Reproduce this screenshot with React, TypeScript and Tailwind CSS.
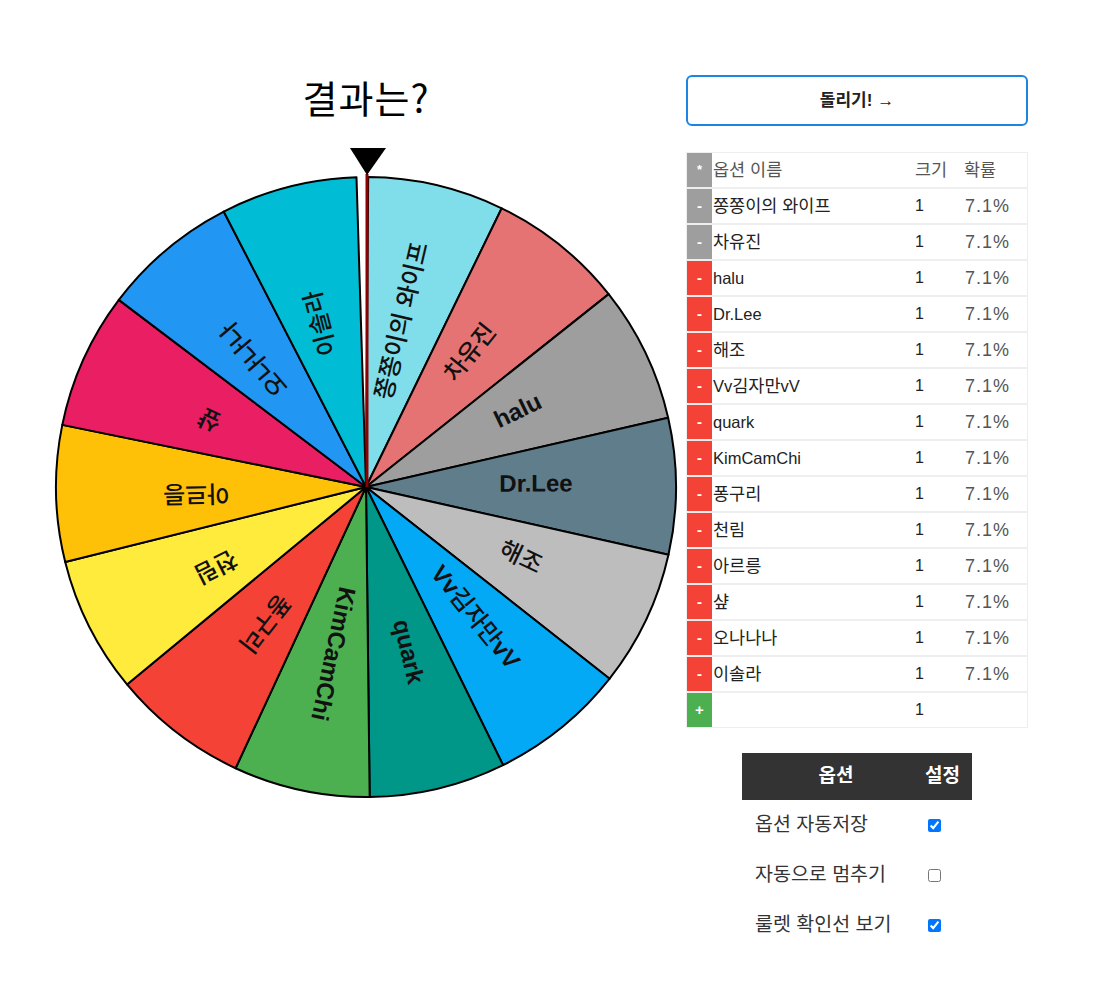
const NAMES = [
  "쫑쫑이의 와이프",
  "차유진",
  "halu",
  "Dr.Lee",
  "해조",
  "Vv김자만vV",
  "quark",
  "KimCamChi",
  "퐁구리",
  "천림",
  "아르릉",
  "샾",
  "오나나나",
  "이솔라",
];

const COLORS = [
  "#80DEEA",
  "#E57373",
  "#9E9E9E",
  "#607D8B",
  "#BDBDBD",
  "#03A9F4",
  "#009688",
  "#4CAF50",
  "#F44336",
  "#FFEB3B",
  "#FFC107",
  "#E91E63",
  "#2196F3",
  "#00BCD4",
];

const CX = 320;
const CY = 347;
const R = 310;
// each option is 7.1%, so the wheel leaves a small gap at the top
const STEP = 0.071 * 360;
const OFFSET = 0.4;

const pt = (deg: number, r: number) => {
  const a = (deg * Math.PI) / 180;
  return [CX + r * Math.sin(a), CY - r * Math.cos(a)];
};

// split a label into hangul / latin runs
const runs = (s: string) => s.split(/([가-힣 ]+)/).filter(Boolean);
const isHangul = (s: string) => /[가-힣]/.test(s);

const Wheel = () => (
  <svg width="640" height="662" className="mt-[21px] block">
    {NAMES.map((name, i) => {
      const a0 = OFFSET + i * STEP;
      const a1 = a0 + STEP;
      const [x0, y0] = pt(a0, R);
      const [x1, y1] = pt(a1, R);
      return (
        <path
          key={name}
          d={`M${CX} ${CY} L${x0} ${y0} A${R} ${R} 0 0 1 ${x1} ${y1} Z`}
          fill={COLORS[i]}
          stroke="#000"
          strokeWidth="2"
          strokeLinejoin="round"
        />
      );
    })}
    {NAMES.map((name, i) => {
      const mid = OFFSET + i * STEP + STEP / 2;
      return (
        <text
          key={name}
          transform={`translate(${CX} ${CY}) rotate(${mid - 90})`}
          x="170"
          y="5"
          textAnchor="middle"
          fontSize="24"
          fill="#111"
          fontFamily="'Liberation Sans', 'Noto Sans CJK KR', sans-serif"
        >
          {runs(name).map((part, j) => (
            <tspan key={j} fontWeight={isHangul(part) ? 500 : 700}>
              {part}
            </tspan>
          ))}
        </text>
      );
    })}
    <line x1="321" y1="34" x2="321" y2={CY} stroke="#8B0000" strokeWidth="3" />
    <polygon points="304,8 340,8 321,35" fill="#000" />
  </svg>
);

const Label = ({ text, ko }: { text: string; ko: string }) => (
  <>
    {runs(text).map((part, j) =>
      isHangul(part) ? (
        <span key={j} className={ko}>
          {part}
        </span>
      ) : (
        <span key={j}>{part}</span>
      )
    )}
  </>
);

const rows = NAMES.map((name, i) => ({ name, locked: i < 2 }));

const App = () => {
  return (
    <div className="flex min-h-[983px] bg-white pt-[75px] font-['Liberation_Sans','Noto_Sans_CJK_KR',sans-serif] text-[#222]">
      <div className="ml-[46px] flex w-[640px] flex-col items-center">
        <h1 className="font-['Noto_Sans_CJK_KR',sans-serif] text-[38px] leading-[44px] font-normal tracking-[1px] text-black">결과는?</h1>
        <Wheel />
      </div>

      <div className="w-[342px]">
        <button className="h-[51px] w-full rounded-[6px] border-2 border-[#1c84e3] bg-white text-[17px] font-bold text-[#222]">
          돌리기! <span className="font-normal">→</span>
        </button>

        <div className="mt-[26px] border border-[#eee]">
          <div className="flex h-[34px] items-center">
            <div className="flex h-full w-[25px] items-center justify-center bg-[#9e9e9e] text-[13px] font-bold text-white">*</div>
            <div className="flex-1 pl-[1px] text-[17.5px] text-[#555]">옵션 이름</div>
            <div className="w-[49px] text-[17.5px] text-[#555]">크기</div>
            <div className="w-[63px] text-[17.5px] text-[#555]">확률</div>
          </div>
          {rows.map((row) => (
            <div key={row.name} className="flex h-[36px] items-center border-t-2 border-[#eee]">
              <div
                className={`flex h-full w-[25px] items-center justify-center text-[15px] font-bold text-white ${
                  row.locked ? "bg-[#9e9e9e]" : "bg-[#f44336]"
                }`}
              >
                -
              </div>
              <div className="flex-1 pl-[1px] text-[16.5px] text-[#222]">
                <Label text={row.name} ko="text-[17.5px]" />
              </div>
              <div className="w-[49px] text-[16px] text-[#222]">1</div>
              <div className="w-[63px] pl-[1px] text-[18px] tracking-[1px] text-[#555]">7.1%</div>
            </div>
          ))}
          <div className="flex h-[36px] items-center border-t-2 border-[#eee]">
            <div className="flex h-full w-[25px] items-center justify-center bg-[#4caf50] text-[15px] font-bold text-white">+</div>
            <div className="flex-1" />
            <div className="w-[49px] text-[16px] text-[#222]">1</div>
            <div className="w-[63px]" />
          </div>
        </div>

        <table className="mx-auto mt-[25px] w-[230px] border-collapse">
          <thead>
            <tr className="h-[47px] bg-[#333] text-[19px] font-bold text-white">
              <th className="w-[180px] pl-[8px] text-center">옵션</th>
              <th className="pr-[12px] text-right">설정</th>
            </tr>
          </thead>
          <tbody className="text-[19.5px] text-[#333]">
            {[
              ["옵션 자동저장", true],
              ["자동으로 멈추기", false],
              ["룰렛 확인선 보기", true],
            ].map(([label, checked]) => (
              <tr key={label as string} className="h-[50px]">
                <td className="pl-[13px] whitespace-nowrap">{label}</td>
                <td className="pl-[6px]">
                  <input type="checkbox" defaultChecked={checked as boolean} className="block h-[13px] w-[13px]" />
                </td>
              </tr>
            ))}
          </tbody>
        </table>
      </div>
    </div>
  );
};

export default App;
